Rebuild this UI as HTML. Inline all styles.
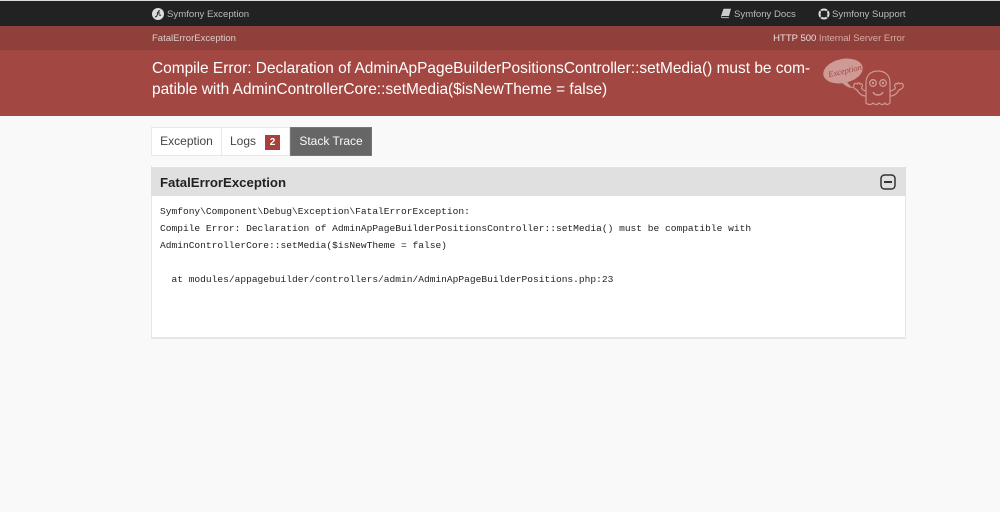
<!DOCTYPE html>
<html><head><meta charset="utf-8">
<style>
html,body{margin:0;padding:0;width:1000px;height:512px;overflow:hidden;background:#f9f9f9;font-family:"Liberation Sans",Arial,sans-serif;}
body{filter:blur(.3px);}
.a{position:absolute;white-space:nowrap;}
.m{font-family:"Liberation Mono",monospace;font-size:9.57px;color:#222;line-height:17px;}
svg{position:absolute;display:block;}
</style></head><body>
<div class="a" style="left:0;top:0;width:1000px;height:1px;background:#ddd"></div>
<div class="a" style="left:0;top:1px;width:1000px;height:25px;background:#222"></div>
<div class="a" style="left:0;top:26px;width:1000px;height:24px;background:#8f403b"></div>
<div class="a" style="left:0;top:50px;width:1000px;height:66px;background:#a24741"></div>

<svg style="left:152px;top:8px" width="12" height="12" viewBox="0 0 12 12"><circle cx="6" cy="6" r="6" fill="#ddd"/><path d="M3 8.600c1 .6 1.800-.2 2.200-1.600l.9-3c.3-1 1-1.500 2-1.200M4.800 5h3.200M6.800 6.500c.6.800 1.600 1 2.200.3" stroke="#222" stroke-width="1" fill="none"/></svg>
<div class="a" style="left:167px;top:8.500px;font-size:9.6px;line-height:12px;color:#bbb">Symfony Exception</div>

<svg style="left:721px;top:8px" width="10" height="11" viewBox="0 0 10 11"><path d="M2.500.8H10L8 8H1.200C.6 8 .3 8.800.8 9.200H8l-.2.900H1C0 10 -.2 8.800.2 7.500z" fill="#ccc"/></svg>
<div class="a" style="left:734px;top:8.500px;font-size:9.6px;line-height:12px;color:#bbb">Symfony Docs</div>
<svg style="left:818px;top:7.500px" width="12" height="12" viewBox="0 0 12 12"><circle cx="6" cy="6" r="4.500" fill="none" stroke="#ddd" stroke-width="2"/><path d="M2.300 2.300l2 2M9.700 2.300l-2 2M2.300 9.700l2-2M9.700 9.700l-2-2" stroke="#222" stroke-width="1"/></svg>
<div class="a" style="left:832px;top:8.500px;font-size:9.6px;line-height:12px;color:#bbb">Symfony Support</div>

<div class="a" style="left:152px;top:32.500px;font-size:9.5px;line-height:12px;color:#dcc">FatalErrorException</div>
<div class="a" style="right:95px;top:32.500px;font-size:9.5px;line-height:12px;color:#d8aaa6"><span style="color:#eedede">HTTP 500</span> Internal Server Error</div>

<div class="a" style="left:152px;top:57.500px;font-size:15.45px;line-height:21.5px;color:#fff">Compile Error: Declaration of AdminApPageBuilderPositionsController::setMedia() must be com-<br>patible with AdminControllerCore::setMedia($isNewTheme = false)</div>

<svg style="left:820px;top:50px" width="90" height="60" viewBox="820 50 90 60">
<ellipse cx="843" cy="71" rx="20" ry="12" transform="rotate(-12 843 71)" fill="#cf9a96"/>
<path d="M846 80c2 4 5 7 8 8-5 .5-11-3-13-7z" fill="#cf9a96"/>
<text x="828" y="74" transform="rotate(-13 843 71)" font-family="Liberation Serif,serif" font-style="italic" font-size="8.500" fill="#a24741">Exception!</text>
<path d="M866 103V83c0-8 5-12 12-12s12 4 12 12v20c-2 2-4 2-5 0-1.500 2-4 2-6 0-1.500 2-4 2-6 0-1.500 2-5 2-7 0z" fill="none" stroke="#cf9a96" stroke-width="1.200"/>
<circle cx="873" cy="83" r="3.300" fill="none" stroke="#cf9a96" stroke-width="1.300"/><circle cx="883" cy="83" r="3.300" fill="none" stroke="#cf9a96" stroke-width="1.300"/><circle cx="873" cy="83" r="1.200" fill="#cf9a96"/><circle cx="883" cy="83" r="1.200" fill="#cf9a96"/>
<path d="M873 92c2 4 8 4 10 0" fill="none" stroke="#cf9a96" stroke-width="1.400"/>
<path d="M866 96c-5 0-7-3-9-6-3-1-4-3-3-5 0-2 2-2 3-1 1-2 3-1 3 0 2-1 3 1 2 3-1 1 0 3 4 4M890 96c5 0 7-3 9-6 3-1 5-3 4-5 0-2-2-2-3-1-1-2-3-1-3 0-2-1-3 1-2 3 1 1 0 3-5 4" fill="none" stroke="#cf9a96" stroke-width="1.200"/>
</svg>

<div class="a" style="left:151px;top:127px;width:69px;height:27px;background:#fff;border:1px solid #e8e8e8;font-size:12px;line-height:27px;color:#444;text-align:center">Exception</div>
<div class="a" style="left:222px;top:127px;width:67px;height:27px;background:#fff;border:1px solid #e8e8e8;border-left:0;font-size:12px;line-height:27px;color:#444"><span style="position:absolute;left:8px">Logs</span><span style="position:absolute;left:43px;top:7px;width:15px;height:15px;background:#a8403b;color:#fff;font-size:10px;font-weight:bold;line-height:15px;text-align:center">2</span></div>
<div class="a" style="left:290px;top:127px;width:80px;height:27px;background:#666;border:1px solid #777;font-size:12px;line-height:27px;color:#fafafa;text-align:center">Stack Trace</div>

<div class="a" style="left:151px;top:166px;width:753px;height:171px;background:#fff;border:1px solid #e6e6e6;border-width:0 1px 2px 1px"></div>
<div class="a" style="left:151px;top:167px;width:755px;height:29px;background:#e0e0e0"></div>
<div class="a" style="left:160px;top:174.500px;font-size:13.2px;line-height:16px;font-weight:bold;color:#222">FatalErrorException</div>
<svg style="left:880px;top:174px" width="16" height="16" viewBox="0 0 16 16"><rect x="1" y="1" width="14" height="14" rx="3.500" fill="none" stroke="#333" stroke-width="1.500"/><path d="M4 8h8" stroke="#333" stroke-width="2"/></svg>

<div class="a m" style="left:160px;top:203px">Symfony\Component\Debug\Exception\FatalErrorException:<br>Compile Error: Declaration of AdminApPageBuilderPositionsController::setMedia() must be compatible with<br>AdminControllerCore::setMedia($isNewTheme = false)<br><br>&nbsp;&nbsp;at modules/appagebuilder/controllers/admin/AdminApPageBuilderPositions.php:23</div>
</body></html>
